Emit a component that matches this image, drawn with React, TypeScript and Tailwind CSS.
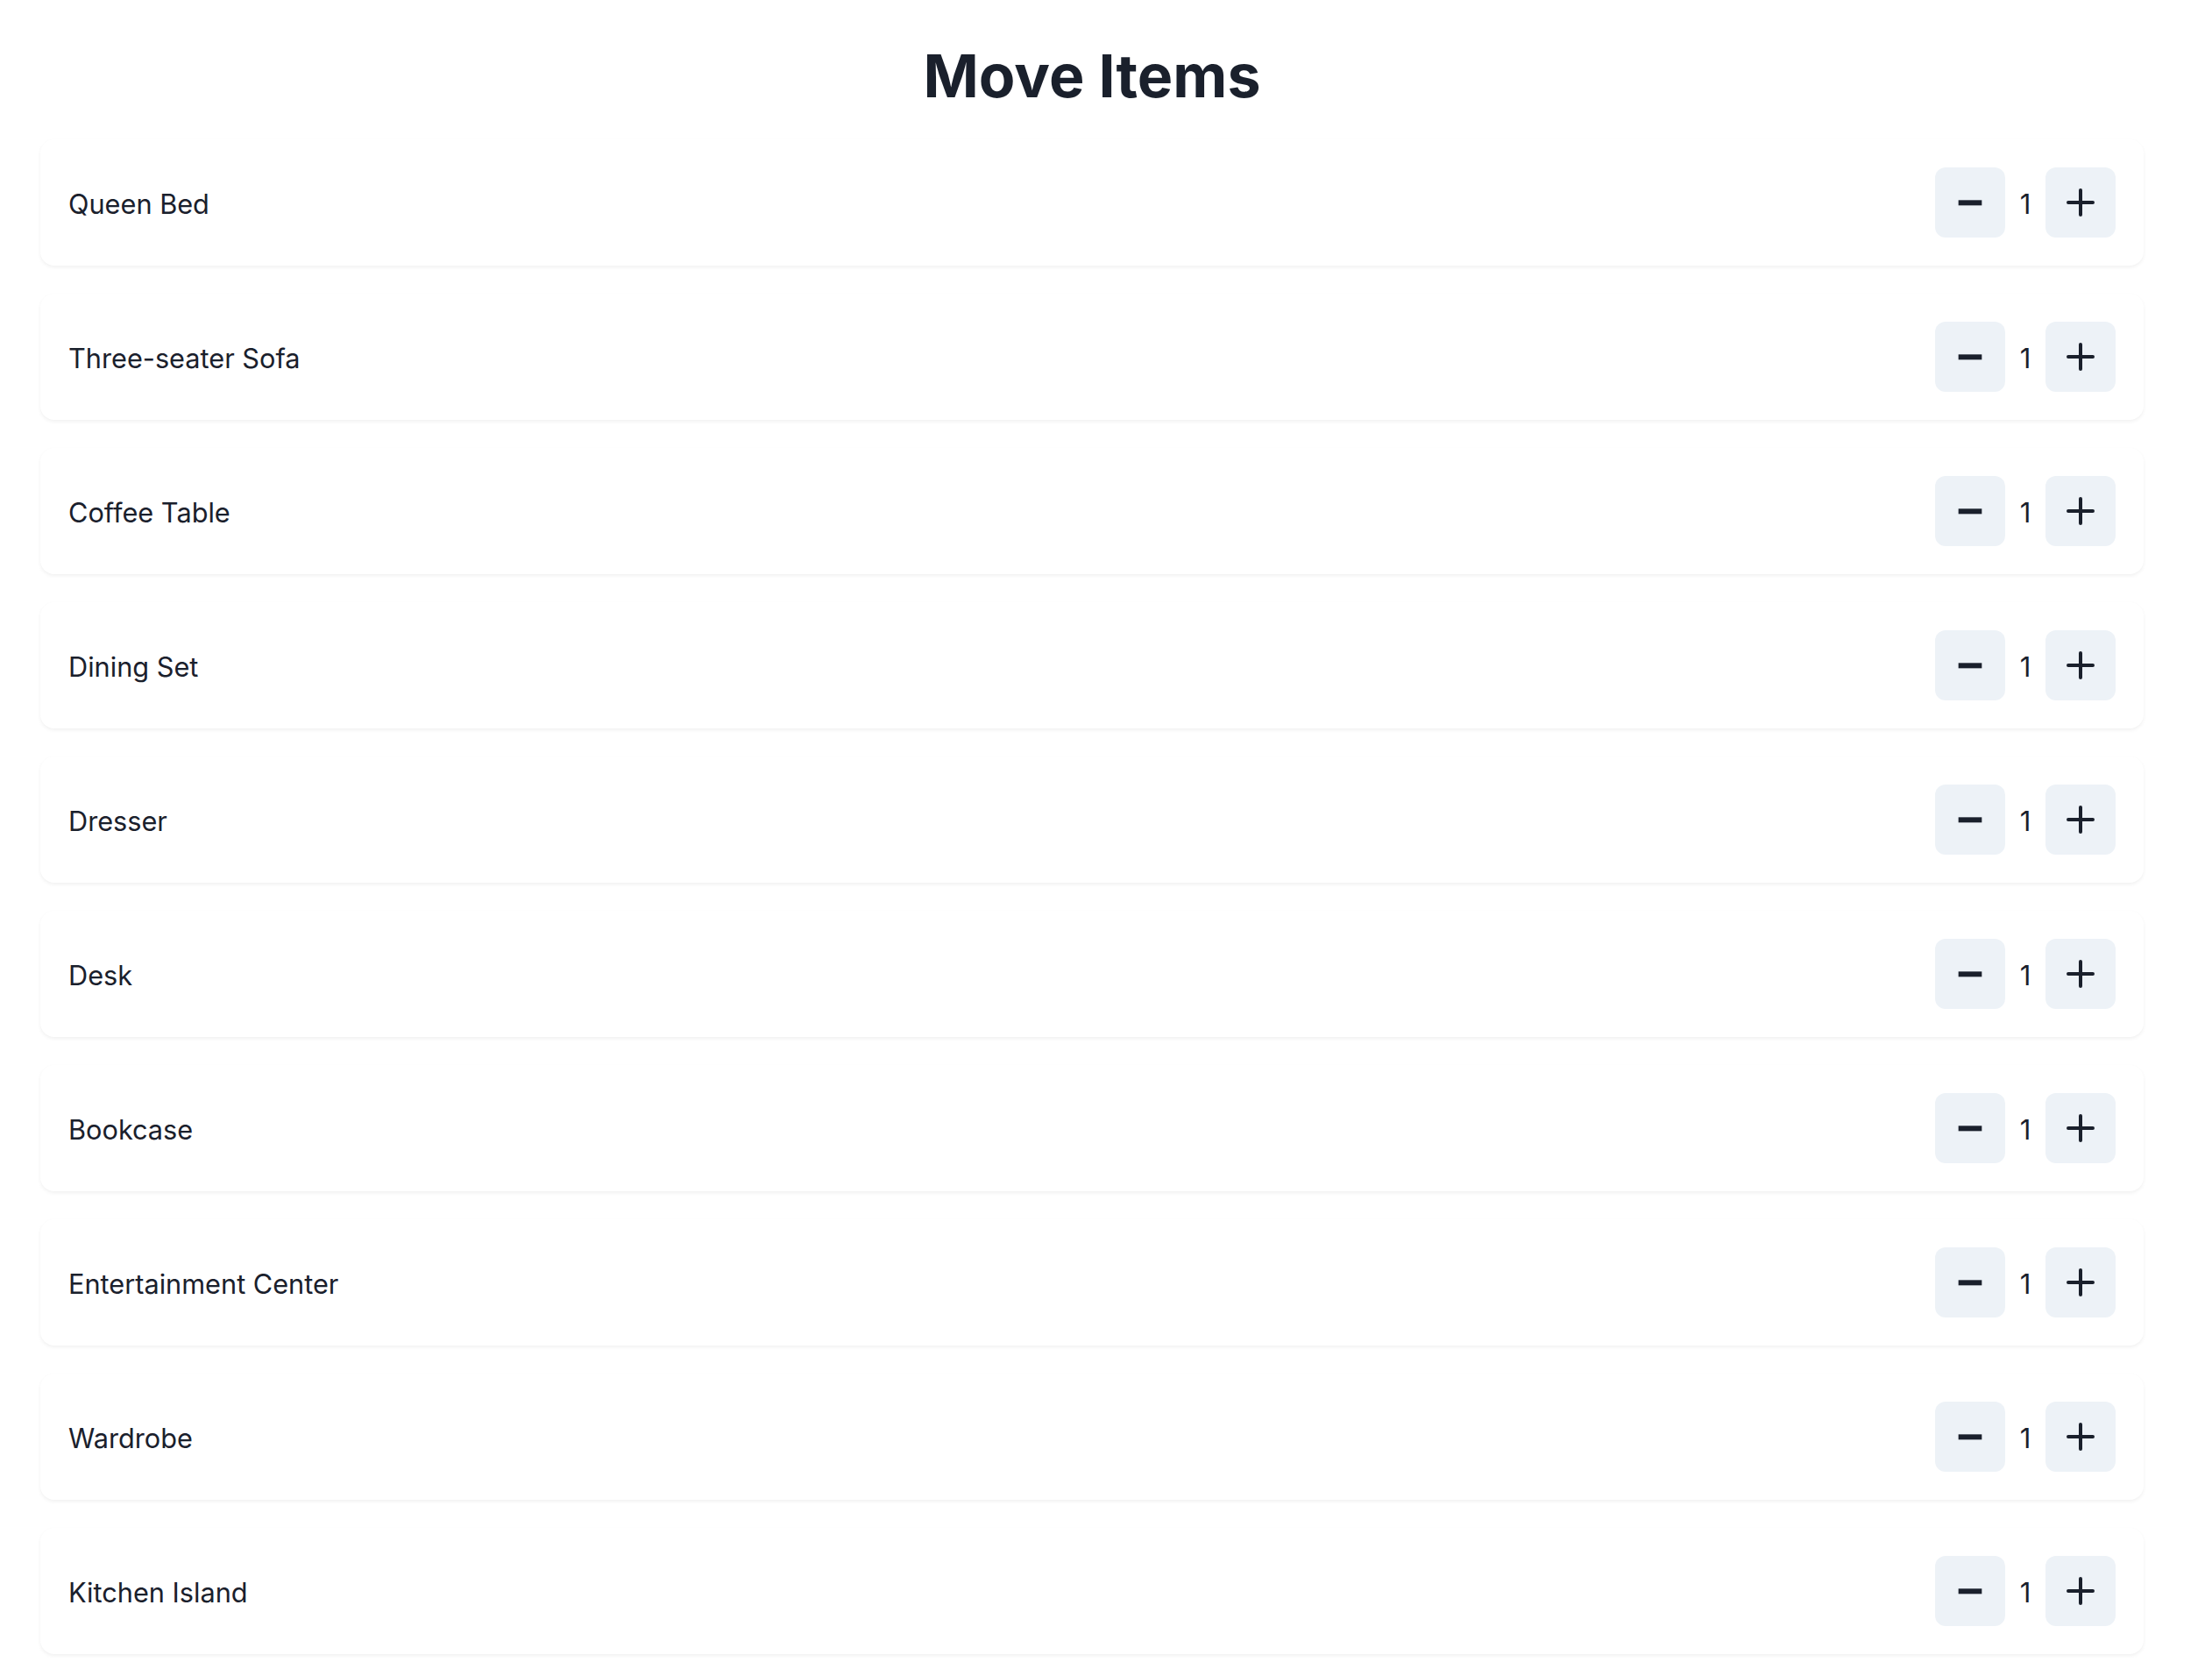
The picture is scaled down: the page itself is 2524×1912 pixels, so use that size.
import React, { useState } from 'react'

const items = [
  'Queen Bed',
  'Three-seater Sofa',
  'Coffee Table',
  'Dining Set',
  'Dresser',
  'Desk',
  'Bookcase',
  'Entertainment Center',
  'Wardrobe',
  'Kitchen Island',
]

const MinusIcon = () => (
  <svg viewBox="0 0 24 24" className="w-8 h-8" fill="currentColor">
    <rect x="2" y="10" width="20" height="4.5" />
  </svg>
)

const PlusIcon = () => (
  <svg viewBox="0 0 24 24" className="w-8 h-8" fill="currentColor">
    <path d="M0,12a1.5,1.5,0,0,0,1.5,1.5h8.75a.25.25,0,0,1,.25.25V22.5a1.5,1.5,0,0,0,3,0V13.75a.25.25,0,0,1,.25-.25H22.5a1.5,1.5,0,0,0,0-3H13.75a.25.25,0,0,1-.25-.25V1.5a1.5,1.5,0,0,0-3,0v8.75a.25.25,0,0,1-.25.25H1.5A1.5,1.5,0,0,0,0,12Z" />
  </svg>
)

const ItemRow: React.FC<{ name: string }> = ({ name }) => {
  const [count, setCount] = useState(1)
  return (
    <div className="flex items-center justify-between h-[144px] px-8 bg-white rounded-2xl shadow-[0_2px_4px_rgba(0,0,0,0.06)]">
      <span className="text-[30.7px] leading-[48px] pt-[3px]">{name}</span>
      <div className="flex items-center">
        <button
          onClick={() => setCount(Math.max(0, count - 1))}
          className="flex items-center justify-center w-20 h-20 rounded-xl bg-[#edf2f7] text-[#1a202c]"
        >
          <MinusIcon />
        </button>
        <span className="w-[46px] text-center text-[31px] leading-[48px] pt-[3px]">{count}</span>
        <button
          onClick={() => setCount(count + 1)}
          className="flex items-center justify-center w-20 h-20 rounded-xl bg-[#edf2f7] text-[#1a202c]"
        >
          <PlusIcon />
        </button>
      </div>
    </div>
  )
}

export default function App() {
  return (
    <div className="min-h-screen bg-white text-[#1a202c] font-['Inter','Liberation_Sans',sans-serif]">
      <div className="w-[2400px] ml-[46px] pt-[45px] pb-12">
        {/* Header */}
        <h1 className="text-center text-[68px] leading-[82px] font-bold mb-[32px]">Move Items</h1>

        <div className="flex flex-col gap-8">
          {items.map((name) => (
            <ItemRow key={name} name={name} />
          ))}
        </div>
      </div>
    </div>
  )
}
